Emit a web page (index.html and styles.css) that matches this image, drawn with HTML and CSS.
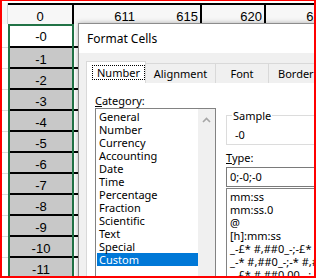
FILE: index.html
```html
<!DOCTYPE html>
<html lang="en">
    <head>
        <meta charset="UTF-8">
        <title>Format Cells</title>
        <link rel="stylesheet" href="styles.css">
    </head>
    <body>
        <div class="frame">
            <div class="sheet">
                <div class="sheet__row sheet__row--head">
                    <div class="cell cell--gutter"></div>
                    <div class="cell cell--a">0</div>
                    <div class="cell cell--b">611</div>
                    <div class="cell cell--c">615</div>
                    <div class="cell cell--d">620</div>
                    <div class="cell cell--e">625</div>
                </div>
                <div class="sheet__row sheet__row--first">
                    <div class="cell cell--gutter"></div>
                    <div class="cell cell--a">-0</div>
                    <div class="cell cell--b"></div>
                </div>
                <div class="sheet__row">
                    <div class="cell cell--gutter"></div>
                    <div class="cell cell--a">-1</div>
                    <div class="cell cell--b"></div>
                </div>
                <div class="sheet__row">
                    <div class="cell cell--gutter"></div>
                    <div class="cell cell--a">-2</div>
                    <div class="cell cell--b"></div>
                </div>
                <div class="sheet__row">
                    <div class="cell cell--gutter"></div>
                    <div class="cell cell--a">-3</div>
                    <div class="cell cell--b"></div>
                </div>
                <div class="sheet__row">
                    <div class="cell cell--gutter"></div>
                    <div class="cell cell--a">-4</div>
                    <div class="cell cell--b"></div>
                </div>
                <div class="sheet__row">
                    <div class="cell cell--gutter"></div>
                    <div class="cell cell--a">-5</div>
                    <div class="cell cell--b"></div>
                </div>
                <div class="sheet__row">
                    <div class="cell cell--gutter"></div>
                    <div class="cell cell--a">-6</div>
                    <div class="cell cell--b"></div>
                </div>
                <div class="sheet__row">
                    <div class="cell cell--gutter"></div>
                    <div class="cell cell--a">-7</div>
                    <div class="cell cell--b"></div>
                </div>
                <div class="sheet__row">
                    <div class="cell cell--gutter"></div>
                    <div class="cell cell--a">-8</div>
                    <div class="cell cell--b"></div>
                </div>
                <div class="sheet__row">
                    <div class="cell cell--gutter"></div>
                    <div class="cell cell--a">-9</div>
                    <div class="cell cell--b"></div>
                </div>
                <div class="sheet__row">
                    <div class="cell cell--gutter"></div>
                    <div class="cell cell--a">-10</div>
                    <div class="cell cell--b"></div>
                </div>
                <div class="sheet__row">
                    <div class="cell cell--gutter"></div>
                    <div class="cell cell--a">-11</div>
                    <div class="cell cell--b"></div>
                </div>
            </div>
            <div class="selection"></div>

            <div class="dialog">
                <div class="dialog__title">Format Cells</div>
                <div class="dialog__body">
                    <div class="tabs">
                        <div class="tab tab--active"><span class="tab__focus">Number</span></div>
                        <div class="tab tab--alignment">Alignment</div>
                        <div class="tab tab--font">Font</div>
                        <div class="tab tab--border">Border</div>
                    </div>
                    <div class="panel">
                        <div class="panel__category">
                            <div class="label"><u>C</u>ategory:</div>
                            <div class="listbox">
                                <ul class="listbox__items">
                                    <li>General</li>
                                    <li>Number</li>
                                    <li>Currency</li>
                                    <li>Accounting</li>
                                    <li>Date</li>
                                    <li>Time</li>
                                    <li>Percentage</li>
                                    <li>Fraction</li>
                                    <li>Scientific</li>
                                    <li>Text</li>
                                    <li>Special</li>
                                    <li class="listbox__item--selected">Custom</li>
                                </ul>
                                <div class="scrollbar">
                                    <svg class="scrollbar__up" width="9" height="6" viewBox="0 0 9 6">
                                        <polyline points="1,5 4.5,1.5 8,5" fill="none" stroke="#a6a6a6" stroke-width="1.6"/>
                                    </svg>
                                </div>
                            </div>
                        </div>
                        <div class="panel__format">
                            <fieldset class="sample">
                                <legend class="sample__label">Sample</legend>
                                <div class="sample__value">-0</div>
                            </fieldset>
                            <div class="label label--type"><u>T</u>ype:</div>
                            <div class="type_input">0;-0;-0</div>
                            <ul class="type_list">
                                <li>mm:ss</li>
                                <li>mm:ss.0</li>
                                <li>@</li>
                                <li>[h]:mm:ss</li>
                                <li>_-£* #,##0_-;-£* #,##0_-;_-£* "-"_-;_-@_-</li>
                                <li>_-* #,##0_-;-* #,##0_-;_-* "-"_-;_-@_-</li>
                                <li>_-£* #,##0.00_-;-£* #,##0.00_-;_-£* "-"??_-;_-@_-</li>
                            </ul>
                        </div>
                    </div>
                </div>
            </div>
        </div>
    </body>
</html>
```

FILE: styles.css
```css
* {
    box-sizing: border-box;
}

body {
    margin: 0;
}

.frame {
    position: relative;
    width: 316px;
    height: 278px;
    border: 2px solid #f00;
    border-top-width: 1px;
    overflow: hidden;
    background-color: #fff;
    font-family: "Liberation Sans", Arial, sans-serif;
    font-size: 13px;
    color: #000;
}

/* sheet */

.sheet__row {
    display: flex;
    height: 21px;
}

.sheet__row--head {
    height: 23px;
    padding-top: 2px;
}

.sheet__row--first {
    height: 24px;
}

.cell {
    flex: none;
    display: flex;
    align-items: center;
    justify-content: flex-end;
    padding-top: 3px;
    line-height: 15px;
    border-bottom: 2px solid #000;
    white-space: nowrap;
}

.cell--gutter {
    width: 6px;
    border-bottom: 1px solid #dcdcdc;
}

.cell--a {
    width: 66px;
    justify-content: center;
    background-color: #c8c8c8;
}

.cell--b {
    width: 64px;
    padding-right: 3px;
}

.cell--c,
.cell--d {
    width: 64px;
    padding-right: 2px;
    border-right: 2px solid #000;
}

.cell--e {
    width: 64px;
    padding-right: 2px;
}

.sheet__row--first .cell--a {
    background-color: #fff;
}

.sheet__row--head .cell {
    border-bottom: none;
    border-top: 2px solid #000;
    background-color: #f7f7f7;
}

.sheet__row--head .cell--gutter {
    border-top: none;
    border-right: 1px solid #d4d4d4;
}

.sheet__row--head .cell--a {
    border-right: 2px solid #000;
}

.selection {
    position: absolute;
    left: 6px;
    top: 23px;
    width: 66px;
    height: 270px;
    border: 2px solid #217346;
    pointer-events: none;
}

/* dialog */

.dialog {
    position: absolute;
    left: 76px;
    top: 22px;
    width: 300px;
    height: 300px;
    border: 1px solid #8c8c8c;
    border-right: none;
    background-color: #fff;
    box-shadow: 0 0 5px rgba(0, 0, 0, .3);
    font-family: "Noto Sans", sans-serif;
    font-size: 11px;
}

.dialog__title {
    height: 29px;
    padding-left: 8px;
    font-size: 12px;
    line-height: 30px;
}

.dialog__body {
    height: 100%;
    padding: 8px 0 0 7px;
    background-color: #f0f0f0;
}

.tabs {
    display: flex;
    align-items: flex-end;
    height: 22px;
    margin-bottom: -1px;
}

.tab {
    flex: none;
    display: flex;
    align-items: center;
    justify-content: center;
    height: 20px;
    margin-left: -1px;
    border: 1px solid #d9d9d9;
    border-bottom: none;
    background-color: #f0f0f0;
    line-height: 13px;
}

.tab--active {
    position: relative;
    z-index: 1;
    width: 60px;
    height: 22px;
    margin-left: 0;
    justify-content: flex-start;
    padding-left: 5px;
    background-color: #fff;
}

.tab__focus {
    padding: 0 4px;
    border: 1px dotted #000;
}

.tab--alignment {
    width: 71px;
}

.tab--font {
    width: 54px;
}

.tab--border {
    width: 64px;
    justify-content: flex-start;
    padding-left: 9px;
}

.panel {
    display: flex;
    gap: 10px;
    height: 100%;
    padding: 10px 0 0 8px;
    border: 1px solid #d9d9d9;
    background-color: #fff;
}

.panel__category {
    flex: none;
    width: 121px;
}

.label {
    line-height: 15px;
}

.listbox {
    display: flex;
    height: 200px;
    border: 1px solid #828282;
}

.listbox__items {
    flex: 1;
    margin: 0;
    padding: 1px 0 0 1px;
    list-style: none;
}

.listbox__items li {
    height: 13px;
    padding-left: 2px;
    line-height: 13px;
}

.listbox__items .listbox__item--selected {
    background-color: #0078d7;
    color: #fff;
}

.scrollbar {
    flex: none;
    display: flex;
    justify-content: center;
    width: 17px;
    padding-top: 8px;
    background-color: #f0f0f0;
}

.panel__format {
    flex: 1;
    min-width: 0;
    margin-top: 15px;
}

.sample {
    margin: 0;
    padding: 5px 8px 2px;
    min-width: 0;
    border: 1px solid #dcdcdc;
}

.sample__label {
    margin-left: -3px;
    padding: 0 1px;
    line-height: 15px;
}

.sample__value {
    line-height: 14px;
}

.label--type {
    margin-top: 5px;
}

.type_input {
    height: 20px;
    margin-top: 2px;
    padding-left: 3px;
    border: 1px solid #7a7a7a;
    line-height: 18px;
}

.type_list {
    height: 100px;
    margin: 1px 0 0;
    padding: 1px 0 0 3px;
    border: 1px solid #828282;
    list-style: none;
    white-space: nowrap;
}

.type_list li {
    height: 13px;
    line-height: 13px;
}
```
